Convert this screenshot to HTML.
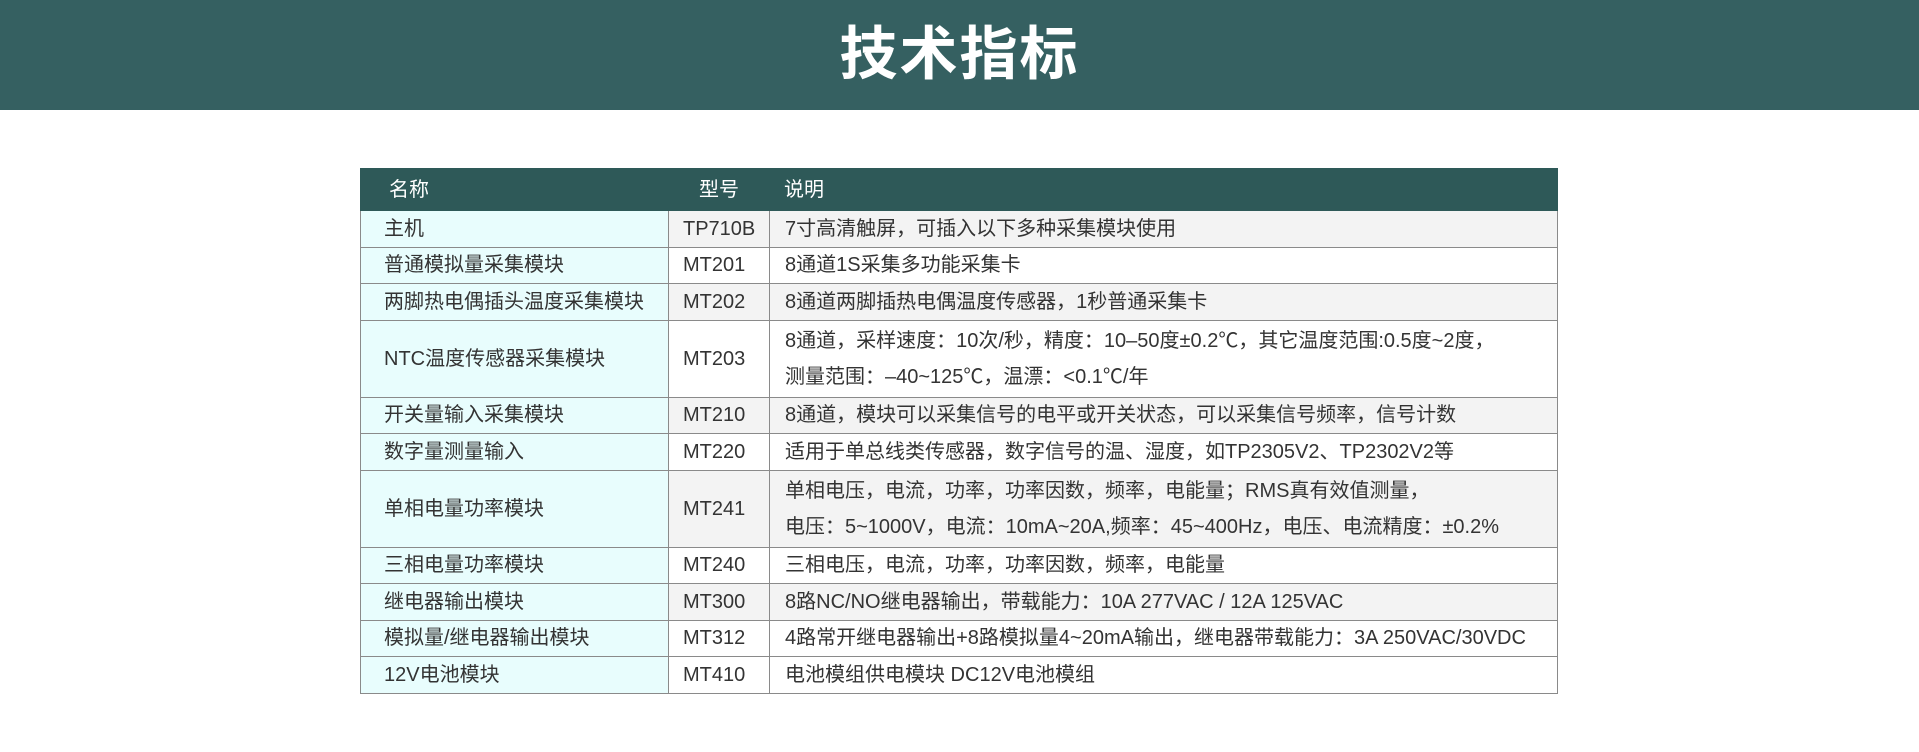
<!DOCTYPE html>
<html><head><meta charset="utf-8"><style>
*{margin:0;padding:0;box-sizing:border-box}
body{width:1919px;height:752px;background:#fff;font-family:"Liberation Sans","Noto Sans CJK SC",sans-serif;position:relative;overflow:hidden}
.band{position:absolute;left:0;top:0;width:1919px;height:110px;background:#356061;color:#fff;text-align:center;font-size:58px;font-weight:bold;line-height:110px;letter-spacing:2px}
table{position:absolute;left:360px;top:168px;width:1198px;border-collapse:collapse;font-size:20px;color:#333;table-layout:fixed}
td,th{border:1px solid #8a8a8a;padding:0 0 0 15px;text-align:left;vertical-align:middle;white-space:nowrap;overflow:hidden;line-height:22px}
th{background:#2e5958;color:#fff;font-weight:normal;font-size:20px;border-color:#2e5958}
tr.h{height:42px}
tr{height:36.5px}
tr.dd{height:77px}
td:first-child{background:#e8fdfd;padding-left:23px}
td:nth-child(2){padding-left:14px}
tr.g td:nth-child(2),tr.g td:nth-child(3){background:#f3f3f3}
td.d{line-height:36px}
</style></head><body>
<div class="band">技术指标</div>
<table>
<colgroup><col style="width:308px"><col style="width:101px"><col></colgroup>
<tr class="h"><th style="padding-left:28px">名称</th><th style="padding-left:30px">型号</th><th style="padding-left:14px">说明</th></tr>
<tr class="g"><td>主机</td><td>TP710B</td><td>7寸高清触屏，可插入以下多种采集模块使用</td></tr>
<tr><td>普通模拟量采集模块</td><td>MT201</td><td>8通道1S采集多功能采集卡</td></tr>
<tr class="g"><td>两脚热电偶插头温度采集模块</td><td>MT202</td><td>8通道两脚插热电偶温度传感器，1秒普通采集卡</td></tr>
<tr class="dd"><td>NTC温度传感器采集模块</td><td>MT203</td><td class="d">8通道，采样速度：10次/秒，精度：10–50度±0.2℃，其它温度范围:0.5度~2度，<br>测量范围：–40~125℃，温漂：&lt;0.1℃/年</td></tr>
<tr class="g"><td>开关量输入采集模块</td><td>MT210</td><td>8通道，模块可以采集信号的电平或开关状态，可以采集信号频率，信号计数</td></tr>
<tr><td>数字量测量输入</td><td>MT220</td><td>适用于单总线类传感器，数字信号的温、湿度，如TP2305V2、TP2302V2等</td></tr>
<tr class="g dd"><td>单相电量功率模块</td><td>MT241</td><td class="d">单相电压，电流，功率，功率因数，频率，电能量；RMS真有效值测量，<br>电压：5~1000V，电流：10mA~20A,频率：45~400Hz，电压、电流精度：±0.2%</td></tr>
<tr><td>三相电量功率模块</td><td>MT240</td><td>三相电压，电流，功率，功率因数，频率，电能量</td></tr>
<tr class="g"><td>继电器输出模块</td><td>MT300</td><td>8路NC/NO继电器输出，带载能力：10A 277VAC / 12A 125VAC</td></tr>
<tr><td>模拟量/继电器输出模块</td><td>MT312</td><td>4路常开继电器输出+8路模拟量4~20mA输出，继电器带载能力：3A 250VAC/30VDC</td></tr>
<tr><td>12V电池模块</td><td>MT410</td><td>电池模组供电模块 DC12V电池模组</td></tr>
</table>
</body></html>
